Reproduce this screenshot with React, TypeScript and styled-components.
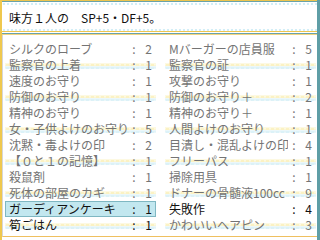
import React from 'react';
import styled, { createGlobalStyle, css } from 'styled-components';

const GlobalStyle = createGlobalStyle`
  html, body {
    margin: 0;
    padding: 0;
    background: #ffffff;
  }
  body {
    font-family: 'Noto Sans CJK JP', 'DejaVu Sans', sans-serif;
  }
`;

type Item = { name: string; count: number; active?: boolean; selected?: boolean };

const items: Item[] = [
  { name: 'シルクのローブ', count: 2 },
  { name: 'Mバーガーの店員服', count: 5 },
  { name: '監察官の上着', count: 1 },
  { name: '監察官の証', count: 1 },
  { name: '速度のお守り', count: 1 },
  { name: '攻撃のお守り', count: 1 },
  { name: '防御のお守り', count: 1 },
  { name: '防御のお守り＋', count: 2 },
  { name: '精神のお守り', count: 1 },
  { name: '精神のお守り＋', count: 1 },
  { name: '女・子供よけのお守り', count: 5 },
  { name: '人間よけのお守り', count: 1 },
  { name: '沈黙・毒よけの印', count: 2 },
  { name: '目潰し・混乱よけの印', count: 4 },
  { name: '【０と１の記憶】', count: 1 },
  { name: 'フリーパス', count: 1 },
  { name: '殺鼠剤', count: 1 },
  { name: '掃除用具', count: 1 },
  { name: '死体の部屋のカギ', count: 1 },
  { name: 'ドナーの骨髄液100cc', count: 9 },
  { name: 'ガーディアンケーキ', count: 1, active: true, selected: true },
  { name: '失敗作', count: 4, active: true },
  { name: '筍ごはん', count: 1, active: true },
  { name: 'かわいいヘアピン', count: 3 },
];

const Frame = styled.div`
  width: 320px;
  height: 240px;
  box-sizing: border-box;
  display: flex;
  flex-direction: column;
  background: #ffffff;
  border-left: 2px solid #efc84e;
  border-right: 3px solid #5f9ea6;
  overflow: hidden;
`;

const HelpBox = styled.div`
  display: flex;
  flex-direction: column;
  height: 35px;
  flex: none;
`;

const Rule = styled.div<{ $side: 'top' | 'bottom' }>`
  flex: none;
  height: 6px;
  ${({ $side }) =>
    $side === 'top'
      ? css`
          background:
            linear-gradient(to bottom, #eec64e 0 1px, #6aa2a8 1px 2px, transparent 2px) top / 100% 3px no-repeat,
            radial-gradient(circle, #d2eef7 1px, transparent 1.6px) 0 3px / 4px 2px repeat-x;
        `
      : css`
          background:
            radial-gradient(circle, #d2eef7 1px, transparent 1.6px) 0 0 / 4px 2px repeat-x,
            linear-gradient(to bottom, transparent 0 2px, #eec64e 2px 3px, transparent 3px 4px, #6aa2a8 4px 5px, #f3d680 5px 6px) 0 0 / 100% 6px no-repeat;
        `}
`;

const HelpText = styled.div`
  flex: 1;
  display: flex;
  align-items: center;
  padding: 1px 0 0 7px;
  font-size: 12px;
  line-height: 16px;
  color: #111111;
  white-space: pre;
`;

const List = styled.div`
  flex: 1;
  display: grid;
  grid-template-columns: 151px 151px;
  grid-auto-rows: 16px;
  column-gap: 9px;
  align-content: start;
  padding: 6px 0 0 2px;
  border-left: 1px solid #d6d6d6;
  border-bottom: 1px solid #efc060;
  margin-bottom: 3px;
`;

const Row = styled.div<{ $striped: boolean; $active: boolean; $selected: boolean }>`
  display: grid;
  grid-template-columns: 1fr 12px 12px;
  align-items: center;
  padding: 0 4px;
  box-sizing: border-box;
  font-size: 12px;
  line-height: 16px;
  white-space: nowrap;
  color: ${({ $active }) => ($active ? '#111111' : '#747474')};
  ${({ $striped }) =>
    $striped &&
    css`
      background:
        radial-gradient(circle at 50% 100%, #fbf2c4 1.8px, transparent 2.3px) 0 5px / 5px 4px repeat-x,
        radial-gradient(circle at 50% 0%, #dcf2f8 1.8px, transparent 2.3px) 0 10px / 5px 4px repeat-x,
        linear-gradient(to bottom, transparent 6px, #fdf9e2 6px 9px, #ebf7fa 9px 12px, transparent 12px);
    `}
  ${({ $selected }) =>
    $selected &&
    css`
      background: #c2e7ef;
      box-shadow: inset 0 0 0 1px #7fb7c2;
    `}
`;

const Name = styled.span`
  overflow: hidden;
`;

const Colon = styled.span`
  text-align: center;
`;

const Count = styled.span`
  text-align: right;
`;

export default function App() {
  return (
    <>
      <GlobalStyle />
      <Frame>
        <HelpBox>
          <Rule $side="top" />
          <HelpText>味方１人の　SP+5・DF+5。</HelpText>
          <Rule $side="bottom" />
        </HelpBox>
        <List>
          {items.map((it, i) => {
            const row = Math.floor(i / 2);
            return (
              <Row key={it.name} $striped={row % 2 === 1} $active={!!it.active} $selected={!!it.selected}>
                <Name>{it.name}</Name>
                <Colon>:</Colon>
                <Count>{it.count}</Count>
              </Row>
            );
          })}
        </List>
      </Frame>
    </>
  );
}
